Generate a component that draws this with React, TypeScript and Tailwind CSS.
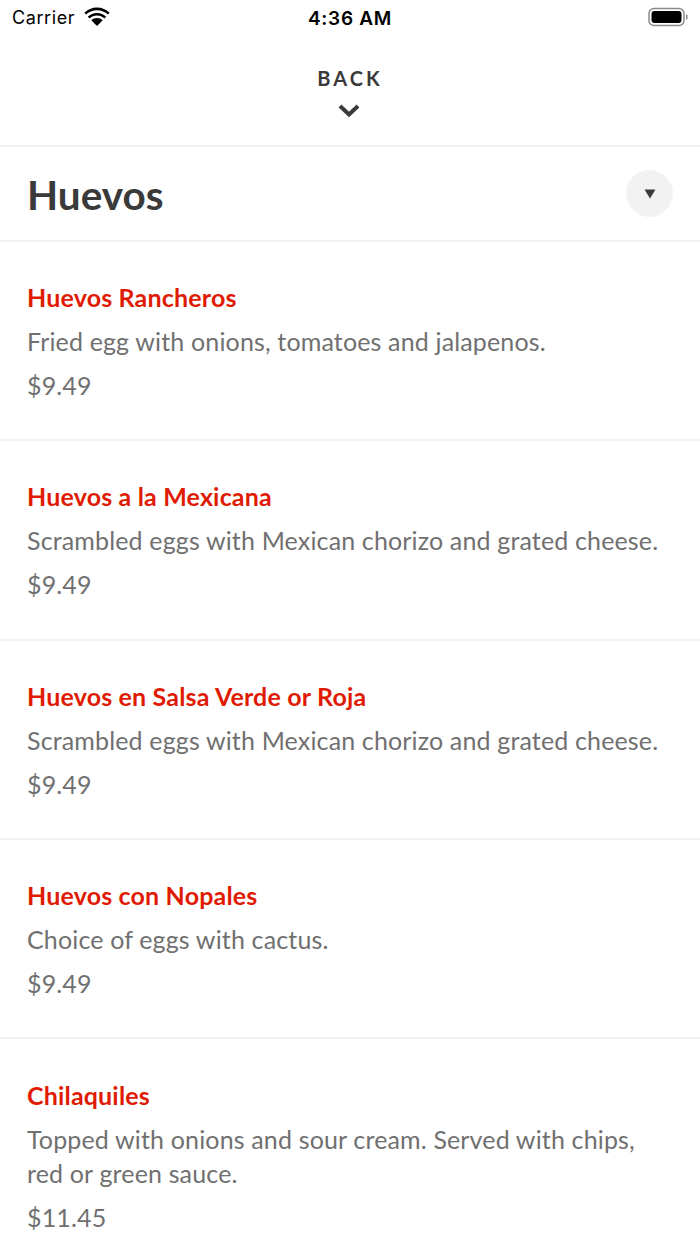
const items = [
  { name: "Huevos Rancheros", desc: "Fried egg with onions, tomatoes and jalapenos.", price: "$9.49" },
  { name: "Huevos a la Mexicana", desc: "Scrambled eggs with Mexican chorizo and grated cheese.", price: "$9.49" },
  { name: "Huevos en Salsa Verde or Roja", desc: "Scrambled eggs with Mexican chorizo and grated cheese.", price: "$9.49" },
  { name: "Huevos con Nopales", desc: "Choice of eggs with cactus.", price: "$9.49" },
  { name: "Chilaquiles", desc: "Topped with onions and sour cream. Served with chips, red or green sauce.", price: "$11.45" },
];

export default function App() {
  return (
    <div className="w-[700px] h-[1244px] overflow-hidden bg-white font-['Lato',sans-serif]">
      <div className="h-[36px] flex items-center justify-between pl-3 pr-2 relative font-['Inter',sans-serif] text-black">
        <div className="flex items-center gap-[9px]">
          <span className="text-[18px] tracking-[0.6px] leading-none">Carrier</span>
          <svg width="26" height="19" viewBox="0 0 26 19" fill="black" className="-mt-[3px]">
            <path d="M13 3.2c4.3 0 8.2 1.7 11 4.4l1.6-1.9C22.3 2.6 17.900 .6 13 .6S3.700 2.600.4 5.700L2 7.600c2.800-2.700 6.700-4.400 11-4.400z" />
            <path d="M13 8.500c2.900 0 5.500 1.100 7.500 3l1.700-1.900C19.800 7.300 16.600 5.900 13 5.900s-6.800 1.400-9.200 3.700l1.700 1.900c2-1.900 4.600-3 7.500-3z" />
            <path d="M13 11c-2.200 0-4.200.9-5.700 2.300L13 19l5.700-5.700C17.200 11.900 15.200 11 13 11z" />
          </svg>
        </div>
        <span className="absolute left-0 right-0 text-center text-[19px] tracking-[0.7px] font-semibold leading-none">4:36 AM</span>
        <svg width="44" height="20" viewBox="0 0 44 20" fill="none" className="-mt-[2px]">
          <rect x="1" y="1.500" width="35" height="17" rx="5" stroke="#8a8a8a" strokeWidth="1.500" />
          <rect x="3.500" y="4" width="30" height="12" rx="3" fill="black" />
          <rect x="38" y="7.500" width="1.500" height="5" rx="0.700" fill="#8a8a8a" />
        </svg>
      </div>
      <div className="h-[111px] flex flex-col items-center border-b-2 border-[#f2f2f2] pt-[30px]">
        <span className="text-[20px] leading-[24px] font-bold tracking-[3.100px] text-[#3a3a3a]">BACK</span>
        <svg width="22" height="14" viewBox="0 0 22 14" fill="none" className="mt-[14px] -ml-[2px]">
          <path d="M2 2 11 10.500 20 2" stroke="#3a3a3a" strokeWidth="4" />
        </svg>
      </div>
      <div className="h-[95px] flex items-center justify-between pl-[27px] pr-[27px] border-b-2 border-[#f2f2f2]">
        <h1 className="text-[40.500px] leading-none font-bold text-[#3a3a3a] mt-[4px]">Huevos</h1>
        <div className="w-[47px] h-[47px] rounded-full bg-[#f2f2f2] flex items-center justify-center">
          <svg width="12" height="10" viewBox="0 0 12 10" fill="#3a3a3a"><path d="M0.500 0.500h11L6 9.500z" /></svg>
        </div>
      </div>
      {items.map((item) => (
        <div key={item.name} className="border-b-2 border-[#f2f2f2] pl-[27px] pr-7 pt-[38px] last:pt-[39px] pb-[37.330px]">
          <div className="text-[25px] tracking-[0.17px] leading-[34px] font-bold text-[#df1b04]">{item.name}</div>
          <div className="text-[25px] tracking-[0.15px] leading-[34px] text-[#707070] mt-[10px]">{item.desc}</div>
          <div className="text-[25px] tracking-[0.15px] leading-[34px] text-[#707070] mt-[10px]">{item.price}</div>
        </div>
      ))}
    </div>
  );
}
